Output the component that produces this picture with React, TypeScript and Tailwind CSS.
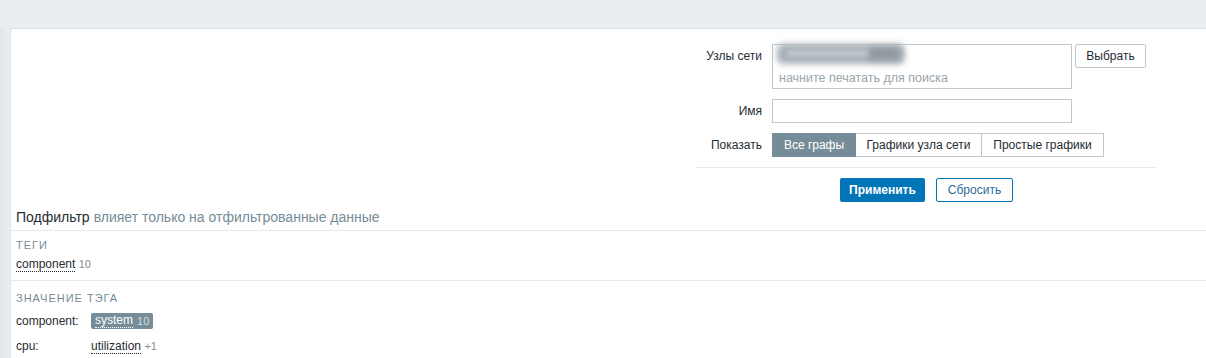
import React from "react";

const font = { fontFamily: '"Liberation Sans", Arial, sans-serif' };

function Label({ children, top = false }: { children: React.ReactNode; top?: boolean }) {
  return (
    <div className={`w-[76px] shrink-0 text-right pr-[10px] ${top ? "pt-[3px]" : "self-center"}`}>
      {children}
    </div>
  );
}

function TagLink({ children }: { children: React.ReactNode }) {
  return <span className="border-b border-dotted border-[#1f2c33] leading-[14px]">{children}</span>;
}

export default function App() {
  return (
    <div style={font} className="w-full h-[358px] bg-[#ebeef0] pt-[28px] text-[12px] text-[#1f2c33] overflow-hidden flex">
      <div className="w-[10px] shrink-0 bg-gradient-to-r from-[#e2e6e9] to-[#eceff1]" />
      <div className="flex-1 bg-white border-t border-l border-[#dde2e5]">
        {/* filter form */}
        <div className="ml-[685px] w-[460px] pt-[15px]">
          <div className="flex">
            <Label top>Узлы сети</Label>
            <div className="relative w-[300px] h-[45px] border border-[#bfc8cd]">
              <div className="absolute left-[6px] top-[25px] leading-[16px] text-[12.5px] text-[#9aa5ab]">
                начните печатать для поиска
              </div>
              <div className="absolute left-[4px] top-[-1px] w-[128px] h-[20px] rounded-[6px] bg-[#a7b0b6] blur-[3px]" />
              <div className="absolute left-[14px] top-[6px] w-[84px] h-[5px] bg-[#c6cdd1] blur-[2px]" />
              <div className="absolute left-[96px] top-[3px] w-[30px] h-[12px] bg-[#8f999f] blur-[3px]" />
            </div>
            <button className="ml-[3px] h-[24px] w-[71px] border border-[#bfc8cd] bg-white rounded-[2px] text-[#1f2c33]">
              Выбрать
            </button>
          </div>
          <div className="flex mt-[10px]">
            <Label>Имя</Label>
            <div className="w-[300px] h-[24px] border border-[#bfc8cd]" />
          </div>
          <div className="flex mt-[10px]">
            <Label>Показать</Label>
            <div className="flex h-[24px]">
              <div className="w-[84px] bg-[#768d99] text-white flex items-center justify-center border border-[#768d99]">
                Все графы
              </div>
              <div className="w-[126px] flex items-center justify-center border-y border-r border-[#bfc8cd]">
                Графики узла сети
              </div>
              <div className="w-[122px] flex items-center justify-center border-y border-r border-[#bfc8cd]">
                Простые графики
              </div>
            </div>
          </div>
          <div className="mt-[10px] border-t border-[#e6e9eb]" />
          <div className="flex gap-[11px] mt-[10px] ml-[144px]">
            <button className="w-[85px] h-[24px] bg-[#0275b8] text-white rounded-[2px] font-bold text-[12px]">
              Применить
            </button>
            <button className="w-[77px] h-[24px] bg-white border border-[#0275b8] text-[#2a6d9a] rounded-[2px]">
              Сбросить
            </button>
          </div>
        </div>

        {/* subfilter */}
        <div className="mt-[2px]">
          <div className="px-[5px] h-[26px] flex items-center text-[14px]">
            Подфильтр <span className="ml-[4px] text-[#768d99]">влияет только на отфильтрованные данные</span>
          </div>
          <div className="border-t border-[#e6e9eb] px-[5px] pt-[7px] pb-[8px]">
            <div className="text-[11px] text-[#768d99] tracking-[1px] leading-[14px]">ТЕГИ</div>
            <div className="mt-[5px] leading-[15px]">
              <TagLink>component</TagLink> <span className="text-[11px] text-[#7d8c94]">10</span>
            </div>
          </div>
          <div className="border-t border-[#e6e9eb] px-[5px] pt-[10px]">
            <div className="text-[11px] text-[#768d99] tracking-[1px] leading-[14px]">ЗНАЧЕНИЕ ТЭГА</div>
            <div className="flex items-center mt-[8px] h-[16px]">
              <div className="w-[75px]">component:</div>
              <div className="bg-[#768d99] text-white px-[4px] h-[16px] flex items-center rounded-[2px]">
                <span className="border-b border-dotted border-white leading-[13px]">system</span>
                <span className="ml-[4px] text-[11px] text-[#d5dde1]">10</span>
              </div>
            </div>
            <div className="flex items-center mt-[9px] h-[16px]">
              <div className="w-[75px]">cpu:</div>
              <div>
                <TagLink>utilization</TagLink> <span className="text-[11px] text-[#7d8c94]">+1</span>
              </div>
            </div>
          </div>
        </div>
      </div>
    </div>
  );
}
